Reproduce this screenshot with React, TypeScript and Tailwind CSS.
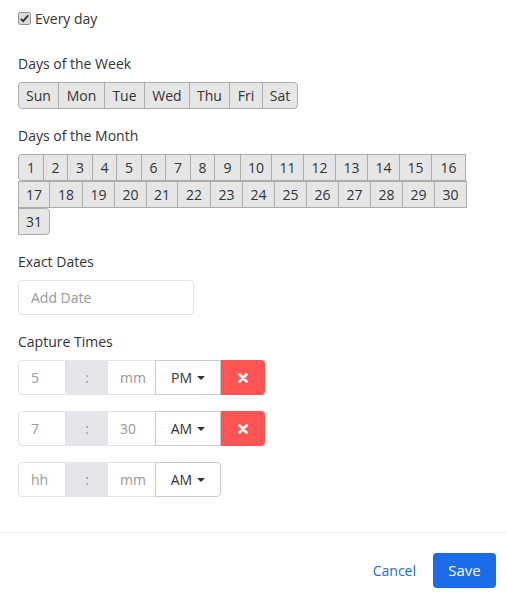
import React from "react";

const week: [string, string][] = [
  ["Sun", "w-[41px] rounded-l-[4px]"],
  ["Mon", "w-[47px] -ml-px"],
  ["Tue", "w-[41px] -ml-px"],
  ["Wed", "w-[46px] -ml-px"],
  ["Thu", "w-[41px] -ml-px"],
  ["Fri", "w-[34px] -ml-px"],
  ["Sat", "w-[36px] -ml-px rounded-r-[4px]"],
];

const row1: [string, string][] = [
  ["1", "w-[26px] rounded-l-[4px]"],
  ["2", "w-[25px] -ml-px"],
  ["3", "w-[26px] -ml-px"],
  ["4", "w-[25px] -ml-px"],
  ["5", "w-[26px] -ml-px"],
  ["6", "w-[25px] -ml-px"],
  ["7", "w-[26px] -ml-px"],
  ["8", "w-[25px] -ml-px"],
  ["9", "w-[27px] -ml-px"],
  ["10", "w-[32px] -ml-px"],
  ["11", "w-[33px] -ml-px"],
  ["12", "w-[33px] -ml-px"],
  ["13", "w-[33px] -ml-px"],
  ["14", "w-[33px] -ml-px"],
  ["15", "w-[33px] -ml-px"],
  ["16", "w-[35px] -ml-px"],
];

const row2: [string, string][] = [
  ["17", "w-[32px]"],
  ["18", "w-[34px] -ml-px"],
  ["19", "w-[33px] -ml-px"],
  ["20", "w-[33px] -ml-px"],
  ["21", "w-[32px] -ml-px"],
  ["22", "w-[34px] -ml-px"],
  ["23", "w-[33px] -ml-px"],
  ["24", "w-[33px] -ml-px"],
  ["25", "w-[33px] -ml-px"],
  ["26", "w-[33px] -ml-px"],
  ["27", "w-[33px] -ml-px"],
  ["28", "w-[33px] -ml-px"],
  ["29", "w-[33px] -ml-px"],
  ["30", "w-[33px] -ml-px"],
];

const row3: [string, string][] = [["31", "w-[32px] rounded-r-[4px]"]];

function DayBtn({ label, cls }: { label: string; cls: string }) {
  return (
    <div
      className={
        "h-[27px] shrink-0 flex items-center justify-center bg-[#e6e6e6] border border-[#adadad] text-[#333] text-[14px] " +
        cls
      }
    >
      {label}
    </div>
  );
}

function Label({ children, cls }: { children: React.ReactNode; cls: string }) {
  return <div className={"h-5 leading-5 text-[14px] text-[#333] " + cls}>{children}</div>;
}

function Caret() {
  return (
    <svg width="8" height="4" viewBox="0 0 8 4" className="ml-[5px]">
      <path d="M0 0 L8 0 L4 4 Z" fill="#333" />
    </svg>
  );
}

function XIcon() {
  return (
    <svg width="10" height="10" viewBox="0 0 10 10">
      <path d="M1.5 1.5 L8.5 8.5 M8.5 1.5 L1.5 8.5" stroke="#fff" strokeWidth="2.8" strokeLinecap="round" />
    </svg>
  );
}

function TimeRow({
  hour,
  minute,
  ampm,
  del,
  cls,
}: {
  hour: string;
  minute: string;
  ampm: string;
  del: boolean;
  cls: string;
}) {
  return (
    <div className={"flex h-[35px] text-[14px] " + cls}>
      <div className="w-[48px] h-full border border-[#e1e1e1] rounded-l-[4px] flex items-center pl-[12px] text-[#999]">
        {hour}
      </div>
      <div className="w-[42px] h-full bg-[#e5e6ea] flex items-center justify-center text-[#999]">:</div>
      <div className="w-[47px] h-full border-y border-[#e1e1e1] flex items-center pl-[12px] text-[#999]">
        {minute}
      </div>
      <div
        className={
          "w-[66px] h-full border border-[#cccccc] bg-white flex items-center justify-center text-[#333] " +
          (del ? "" : "rounded-r-[4px]")
        }
      >
        {ampm}
        <Caret />
      </div>
      {del && (
        <div className="w-[44px] h-full bg-[#ff5454] rounded-r-[4px] flex items-center justify-center">
          <XIcon />
        </div>
      )}
    </div>
  );
}

export default function App() {
  return (
    <div
      className="w-[506px] h-[600px] bg-white relative"
      style={{ fontFamily: '"Open Sans", "Noto Sans", Arial, sans-serif' }}
    >
      <div className="px-[18px] pt-[8px]">
        <div className="h-5 flex items-center">
          <svg width="13" height="13" viewBox="0 0 13 13" className="shrink-0">
            <rect x="0.5" y="0.5" width="12" height="12" rx="2" fill="#dcdcdc" stroke="#8f8f8f" />
            <path d="M2.8 6.8 L5.2 9.2 L10.2 3.4" stroke="#333" strokeWidth="1.9" fill="none" />
          </svg>
          <span className="ml-[4px] text-[14px] text-[#333]">Every day</span>
        </div>

        <Label cls="mt-[26px]">Days of the Week</Label>
        <div className="flex mt-2">
          {week.map(([l, c]) => (
            <DayBtn key={l} label={l} cls={c} />
          ))}
        </div>

        <Label cls="mt-[17px]">Days of the Month</Label>
        <div className="mt-2 flex flex-col">
          <div className="flex">
            {row1.map(([l, c]) => (
              <DayBtn key={l} label={l} cls={c} />
            ))}
          </div>
          <div className="flex">
            {row2.map(([l, c]) => (
              <DayBtn key={l} label={l} cls={c} />
            ))}
          </div>
          <div className="flex">
            {row3.map(([l, c]) => (
              <DayBtn key={l} label={l} cls={c} />
            ))}
          </div>
        </div>

        <Label cls="mt-[17px]">Exact Dates</Label>
        <div className="mt-2 w-[176px] h-[35px] border border-[#e1e1e1] rounded-[4px] flex items-center pl-[12px] text-[14px] text-[#999]">
          Add Date
        </div>

        <Label cls="mt-[17px]">Capture Times</Label>
        <TimeRow cls="mt-2" hour="5" minute="mm" ampm="PM" del={true} />
        <TimeRow cls="mt-[16px]" hour="7" minute="30" ampm="AM" del={true} />
        <TimeRow cls="mt-[16px]" hour="hh" minute="mm" ampm="AM" del={false} />
      </div>

      <div className="mt-[35px] border-t border-[#e5e5e5]" />
      <div className="flex justify-end items-center pt-[20px] pr-[10px]">
        <span className="text-[14px] text-[#1a6ce8] mr-[17px]">Cancel</span>
        <div className="w-[63px] h-[35px] rounded-[4px] bg-[#1a6ce8] text-white text-[15px] flex items-center justify-center">
          Save
        </div>
      </div>
    </div>
  );
}
